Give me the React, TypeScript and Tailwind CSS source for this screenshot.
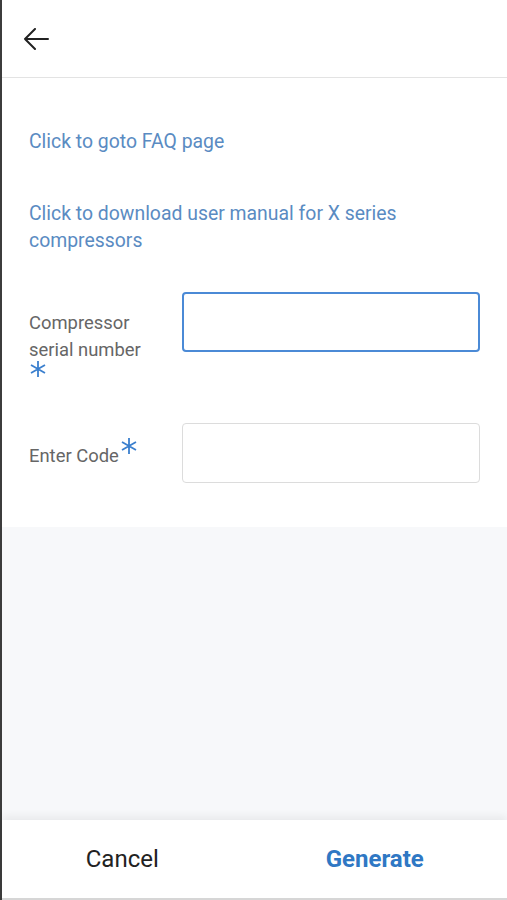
import React from 'react'

function BackArrow() {
  return (
    <svg width="26" height="22" viewBox="0 0 26 22" fill="none">
      <path d="M25 11H2M12 1L2 11l10 10" stroke="#222" strokeWidth="2" strokeLinecap="round" strokeLinejoin="round" />
    </svg>
  )
}

function Star({ className = '' }: { className?: string }) {
  return (
    <svg width="16" height="18" viewBox="0 0 16 18" className={className}>
      <path d="M8 1v16M1 5l14 8M1 13l14-8" stroke="#3a7fce" strokeWidth="1.8" />
    </svg>
  )
}

export default function App() {
  return (
    <div className="flex h-screen flex-col border-l-2 border-[#3c3c3c] bg-white font-['Roboto',sans-serif]">
      <header className="flex h-[78px] items-center border-b border-[#e3e3e3] pl-[21px]">
        <button className="flex items-center">
          <BackArrow />
        </button>
      </header>

      <section className="px-[27px] pb-[44px] pt-[50px]">
        <a className="block text-[19.4px] leading-[27px] text-[#5a8bc2]">Click to goto FAQ page</a>
        <a className="mt-[45px] block text-[19.4px] leading-[27px] text-[#5a8bc2]">
          Click to download user manual for X series compressors
        </a>

        <div className="mt-[38px] flex items-start">
          <label className="w-[153px] shrink-0 pt-[17px] text-[18.4px] leading-[27px] text-[#666]">
            Compressor
            <br />
            serial number
            <Star className="-mt-[3px] ml-[1px] block" />
          </label>
          <input className="h-[60px] flex-1 rounded-[4px] border-2 border-[#4b8ad6] bg-white px-3 outline-none" />
        </div>

        <div className="mt-[45px] flex items-center">
          <label className="flex w-[153px] shrink-0 items-start pt-[4px] text-[18.4px] leading-[27px] text-[#666]">
            Enter Code
            <Star className="-mt-[5px] ml-[2px]" />
          </label>
          <input className="h-[60px] flex-1 rounded-[4px] border border-[#dcdcdc] bg-white px-3 outline-none" />
        </div>
      </section>

      <div className="flex-1 bg-[#f7f8fa]" />

      <footer className="flex h-[80px] border-b-2 border-[#d6d6d6] bg-white shadow-[0_-4px_8px_rgba(0,0,0,0.06)]">
        <button className="flex flex-1 items-center justify-center pr-[12px] text-[24px] text-[#222]">Cancel</button>
        <button className="flex flex-1 items-center justify-center pr-[12px] text-[24px] font-bold text-[#2f78c4]">Generate</button>
      </footer>
    </div>
  )
}
